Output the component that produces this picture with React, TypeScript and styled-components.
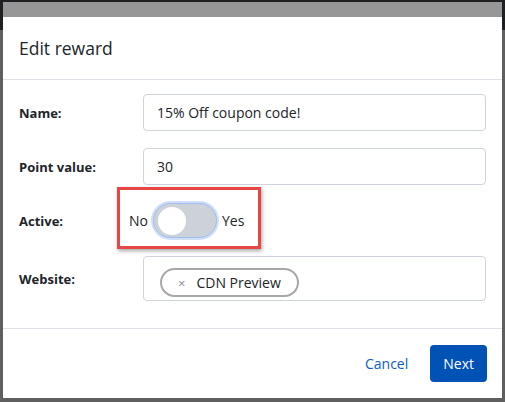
import React from "react";
import styled, { createGlobalStyle } from "styled-components";

//------------------------------------------------------

const GlobalStyle = createGlobalStyle`
  html, body {
    margin: 0;
    padding: 0;
  }
  body {
    font-family: "Open Sans", "Noto Sans", sans-serif;
    color: #212529;
  }
`;

const Backdrop = styled.div`
  width: 505px;
  height: 402px;
  overflow: hidden;
  background: linear-gradient(#1e2023 0 30px, #5f5f5f 30px);
`;

const TopBand = styled.div`
  height: 15px;
  margin: 2px 3px 0;
  background: #979797;
`;

const Modal = styled.div`
  display: flex;
  flex-direction: column;
  height: 381px;
  margin: 0 3px;
  background: #fff;
`;

const Header = styled.div`
  display: flex;
  align-items: center;
  height: 62px;
  padding: 0 16px;
  border-bottom: 1px solid #dee2e6;
`;

const Title = styled.h5`
  margin: 0;
  font-size: 17.5px;
  font-weight: 400;
  color: #212529;
`;

const Body = styled.div`
  flex: 1;
  display: flex;
  flex-direction: column;
  gap: 17px;
  padding: 14px 16px 0;
  border-bottom: 1px solid #dee2e6;
`;

const Row = styled.div`
  position: relative;
  display: grid;
  grid-template-columns: 124px 1fr;
  align-items: center;
`;

const Label = styled.label`
  font-size: 13px;
  font-weight: 700;
  color: #212529;
`;

const Input = styled.div`
  display: flex;
  align-items: center;
  height: 37px;
  box-sizing: border-box;
  padding: 0 13px;
  border: 1px solid #ced4da;
  border-radius: 4px;
  font-size: 14px;
  color: #212529;
`;

const SwitchGroup = styled.div<{ $shift: number }>`
  display: flex;
  align-items: center;
  gap: 5px;
  height: 37px;
  margin-left: ${p => p.$shift}px;
  font-size: 14px;
`;

const Track = styled.div<{ $on: boolean }>`
  display: flex;
  align-items: center;
  justify-content: ${p => (p.$on ? "flex-end" : "flex-start")};
  width: 64px;
  height: 35px;
  box-sizing: border-box;
  padding: 0 4px;
  border-radius: 18px;
  background: ${p => (p.$on ? "#0052b4" : "#cdd2d9")};
  border: 1px solid #9fbdf0;
  box-shadow: 0 0 0 2px rgba(120, 160, 235, 0.35);
`;

const Knob = styled.div`
  width: 28px;
  height: 28px;
  border-radius: 50%;
  background: #fff;
`;

const Highlight = styled.div`
  position: absolute;
  left: 98px;
  top: -15px;
  width: 144px;
  height: 62px;
  box-sizing: border-box;
  border: 3px solid #e84545;
  box-shadow: 1px 2px 4px rgba(0, 0, 0, 0.35);
  pointer-events: none;
`;

const TagBox = styled.div`
  display: flex;
  align-items: flex-start;
  height: 45px;
  box-sizing: border-box;
  padding: 11px 16px 0;
  border: 1px solid #ced4da;
  border-radius: 4px;
`;

const Chip = styled.div`
  display: flex;
  align-items: center;
  gap: 11px;
  height: 29px;
  box-sizing: border-box;
  padding: 0 16px;
  border: 2px solid #a8a8a8;
  border-radius: 15px;
  font-size: 14px;
  color: #212529;
`;

const ChipX = styled.span`
  font-size: 13px;
  color: #8a8a8a;
`;

const Footer = styled.div`
  display: flex;
  justify-content: flex-end;
  align-items: center;
  gap: 6px;
  height: 69px;
  padding: 0 15px;
`;

const Button = styled.button<{ $primary?: boolean }>`
  height: 37px;
  padding: 0 ${p => (p.$primary ? 13 : 16)}px;
  border: none;
  border-radius: 4px;
  font-family: inherit;
  font-size: 14px;
  background: ${p => (p.$primary ? "#0052b4" : "transparent")};
  color: ${p => (p.$primary ? "#fff" : "#0d5cc8")};
`;

//------------------------------------------------------

export default function App() {
  return (
    <>
      <GlobalStyle />
      <Backdrop>
        <TopBand />
        <Modal>
          <Header>
            <Title>Edit reward</Title>
          </Header>
          <Body>
            <Row>
              <Label>Name:</Label>
              <Input>15% Off coupon code!</Input>
            </Row>
            <Row>
              <Label>Point value:</Label>
              <Input>30</Input>
            </Row>
            <Row>
              <Label>Active:</Label>
              <SwitchGroup $shift={-14}>
                <span>No</span>
                <Track $on={false}>
                  <Knob />
                </Track>
                <span>Yes</span>
              </SwitchGroup>
              <Highlight />
            </Row>
            <Row>
              <Label>Website:</Label>
              <TagBox>
                <Chip>
                  <ChipX>×</ChipX>
                  CDN Preview
                </Chip>
              </TagBox>
            </Row>
          </Body>
          <Footer>
            <Button>Cancel</Button>
            <Button $primary>Next</Button>
          </Footer>
        </Modal>
      </Backdrop>
    </>
  );
}
